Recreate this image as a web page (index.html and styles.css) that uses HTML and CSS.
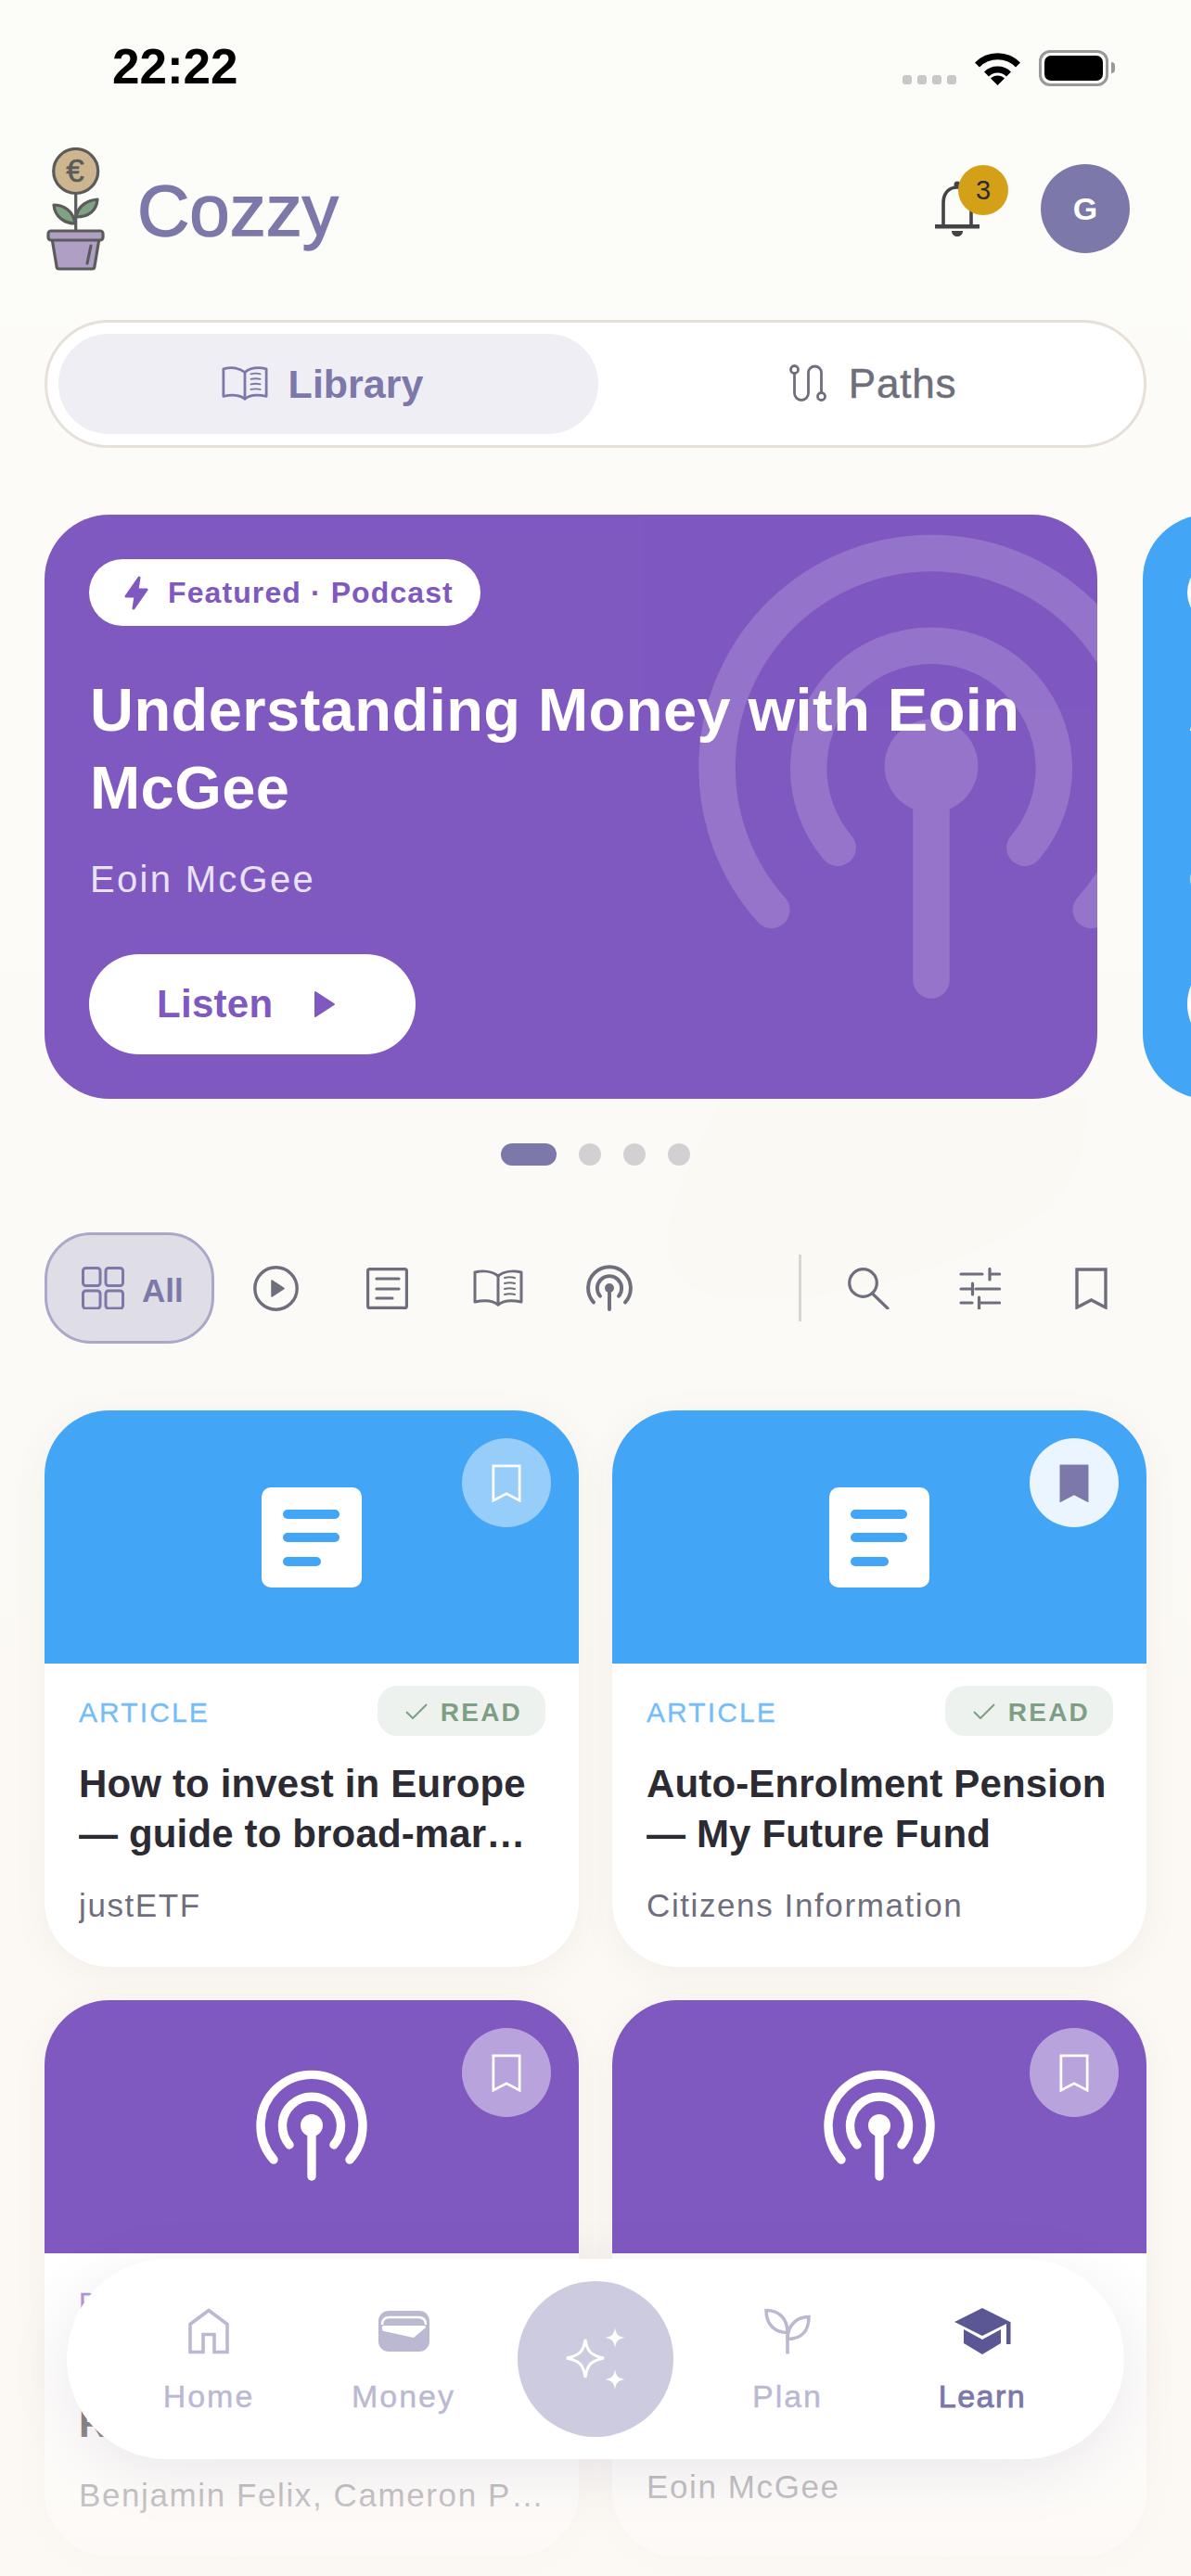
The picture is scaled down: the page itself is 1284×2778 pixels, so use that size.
FILE: index.html
```html
<!DOCTYPE html>
<html lang="en">
<head>
    <meta charset="UTF-8">
    <title>Cozzy</title>
    <meta name="viewport" content="width=device-width, initial-scale=1.0">
    <link rel="stylesheet" href="styles.css">
</head>
<body>
    <svg class="bg-shape" width="1284" height="1500" viewBox="0 0 1284 1500"><path d="M777 1185C750 1240 722 1290 720 1340C720 1385 760 1402 810 1402C930 1402 1080 1350 1133 1300C1165 1270 1172 1230 1170 1185Z"/></svg>

    <svg class="defs" width="0" height="0">
        <symbol id="podcast" viewBox="0 0 120 120">
            <g fill="none" stroke="currentColor" stroke-width="9.4" stroke-linecap="round">
                <path d="M19 97A55 55 0 1 1 101 97"/>
                <path d="M36 81A31.5 31.5 0 1 1 84 81"/>
                <path d="M60 60V115"/>
            </g>
            <circle cx="60" cy="60" r="12" fill="currentColor"/>
        </symbol>
        <symbol id="bookmark" viewBox="0 0 35 45">
            <path d="M2 43V2H33V43L17.5 35Z"/>
        </symbol>
        <symbol id="book" viewBox="0 0 54 40">
            <g fill="none" stroke="currentColor" stroke-width="3" stroke-linecap="round" stroke-linejoin="round">
                <path d="M27 7C21 2 11 1 2 3V35C11 33 21 33 27 38C33 33 43 33 52 35V3C43 1 33 2 27 7Z"/>
                <path d="M27 7V38"/>
                <g stroke-width="2">
                    <path d="M34 9C38 8 41 8 45 9"/>
                    <path d="M34 15C38 14 41 14 45 15"/>
                    <path d="M34 21C38 20 41 20 45 21"/>
                    <path d="M34 27C38 26 41 26 45 27"/>
                </g>
            </g>
        </symbol>
        <symbol id="bolt" viewBox="0 0 26 37">
            <path d="M16 2L2 22H12L10 35L24 15H14Z" fill="currentColor" stroke="currentColor" stroke-width="3" stroke-linejoin="round"/>
        </symbol>
        <symbol id="doc" viewBox="0 0 108 108">
            <rect width="108" height="108" rx="10" fill="#fff"/>
            <rect x="23" y="24" width="61" height="10" rx="5" fill="currentColor"/>
            <rect x="23" y="49" width="61" height="10" rx="5" fill="currentColor"/>
            <rect x="23" y="75" width="41" height="10" rx="5" fill="currentColor"/>
        </symbol>
        <symbol id="check" viewBox="0 0 24 17">
            <path d="M1 9L8 16L23 1" fill="none" stroke="currentColor" stroke-width="2"/>
        </symbol>
    </svg>

    <div class="status-bar">
        <div class="status-time">22:22</div>
        <div class="status-icons">
            <div class="signal"><span></span><span></span><span></span><span></span></div>
            <svg class="wifi" width="51" height="38" viewBox="0 0 51 38">
                <path d="M3.5 16A31 31 0 0 1 47.5 16" fill="none" stroke="#000" stroke-width="7"/>
                <path d="M13.5 26A17 17 0 0 1 37.5 26" fill="none" stroke="#000" stroke-width="7"/>
                <path d="M25.5 38L18 30.5A10.6 10.6 0 0 1 33 30.5Z"/>
            </svg>
            <div class="battery"><div class="battery-fill"></div></div>
            <div class="battery-nub"></div>
        </div>
    </div>

    <div class="header">
        <div class="brand">
            <svg class="logo" width="63" height="133" viewBox="0 0 63 133">
                <g stroke="#5b5b5b" stroke-width="3.2" stroke-linejoin="round" stroke-linecap="round">
                    <path d="M31.7 50V90" fill="none"/>
                    <path d="M31 82C20 82 9 75 8 62C18 62 29 68 31 82Z" fill="#7fa382"/>
                    <path d="M32 75C34 63 44 57 55 56C54 68 46 75 32 75Z" fill="#7fa382"/>
                    <circle cx="31.7" cy="25.5" r="24" fill="#cdb58f"/>
                    <path d="M6 98H57L52 128C52 130 51 131 49 131H14C12 131 11 130 11 128Z" fill="#b09fc4"/>
                    <rect x="2" y="90" width="59" height="10" rx="3" fill="#b09fc4"/>
                    <path d="M48 106L44 125" fill="none"/>
                </g>
                <text class="logo-euro" x="31" y="37">€</text>
            </svg>
            <div class="brand-name">Cozzy</div>
        </div>
        <div class="header-right">
            <div class="bell">
                <svg width="48" height="60" viewBox="0 0 48 60">
                    <path d="M9 47V24C9 12 16 7 24 7C32 7 39 12 39 24V47" fill="none" stroke="#444" stroke-width="3.6"/>
                    <circle cx="24" cy="4" r="3.5" fill="#444"/>
                    <rect y="47" width="48" height="4.5" fill="#444"/>
                    <path d="M18 54H30C30 62 18 62 18 54Z" fill="#444"/>
                </svg>
                <div class="bell-badge">3</div>
            </div>
            <div class="avatar">G</div>
        </div>
    </div>

    <div class="segmented">
        <div class="segment active">
            <svg width="50" height="37"><use href="#book"/></svg>
            <span>Library</span>
        </div>
        <div class="segment">
            <svg width="40" height="40" viewBox="0 0 40 40" fill="none" stroke="currentColor" stroke-width="2.8">
                <circle cx="5.5" cy="5.5" r="4"/>
                <circle cx="34.5" cy="34.5" r="4"/>
                <path d="M5.5 9.5V31A7.5 7.5 0 0 0 20.5 31V9A7 7 0 0 1 34.5 9V30.5"/>
            </svg>
            <span>Paths</span>
        </div>
    </div>

    <div class="carousel">
        <div class="hero hero-purple">
            <svg class="hero-art" width="504" height="504"><use href="#podcast"/></svg>
            <div class="hero-chip">
                <svg width="26" height="37"><use href="#bolt"/></svg>
                <span>Featured · Podcast</span>
            </div>
            <div class="hero-title">Understanding Money with Eoin McGee</div>
            <div class="hero-author">Eoin McGee</div>
            <div class="hero-btn">
                <span>Listen</span>
                <svg width="24" height="30" viewBox="0 0 24 30"><path d="M2 2L22 15L2 28Z" fill="currentColor" stroke="currentColor" stroke-width="2" stroke-linejoin="round"/></svg>
            </div>
        </div>
        <div class="hero hero-blue">
            <div class="hero-chip">
                <svg width="26" height="37"><use href="#bolt"/></svg>
                <span>Featured · Article</span>
            </div>
            <div class="hero-title">Auto-Enrolment Pension — My Future Fund</div>
            <div class="hero-author">Citizens Information</div>
            <div class="hero-btn"><span>Read</span></div>
        </div>
    </div>

    <div class="dots">
        <span class="dot active"></span>
        <span class="dot"></span>
        <span class="dot"></span>
        <span class="dot"></span>
    </div>

    <div class="filters">
        <div class="filter-all">
            <svg width="46" height="46" viewBox="0 0 46 46" fill="none" stroke="currentColor" stroke-width="3">
                <rect x="1.5" y="1.5" width="18.5" height="19" rx="3"/>
                <rect x="26" y="1.5" width="18.5" height="19" rx="3"/>
                <rect x="1.5" y="26" width="18.5" height="19" rx="3"/>
                <rect x="26" y="26" width="18.5" height="19" rx="3"/>
            </svg>
            <span>All</span>
        </div>
        <div class="filter-btn">
            <svg width="49" height="49" viewBox="0 0 49 49">
                <circle cx="24.5" cy="24.5" r="22.7" fill="none" stroke="currentColor" stroke-width="3.4"/>
                <path d="M20 16L33 24.5L20 33Z" fill="currentColor" stroke="currentColor" stroke-width="1.5" stroke-linejoin="round"/>
            </svg>
        </div>
        <div class="filter-btn">
            <svg width="45" height="45" viewBox="0 0 45 45" fill="none" stroke="currentColor" stroke-width="3.2" stroke-linecap="round">
                <rect x="1.6" y="1.6" width="41.8" height="41.8" rx="2"/>
                <path d="M11 12H35M11 23H35M11 33H28"/>
            </svg>
        </div>
        <div class="filter-btn">
            <svg width="54" height="40"><use href="#book"/></svg>
        </div>
        <div class="filter-btn">
            <svg width="50" height="50"><use href="#podcast"/></svg>
        </div>
        <div class="filter-gap"></div>
        <div class="filter-divider"></div>
        <div class="filter-btn">
            <svg width="45" height="45" viewBox="0 0 45 45" fill="none" stroke="currentColor" stroke-width="3.2" stroke-linecap="round">
                <circle cx="16.5" cy="16.5" r="14.8"/>
                <path d="M26.5 28L43 44"/>
            </svg>
        </div>
        <div class="filter-btn">
            <svg width="45" height="45" viewBox="0 0 45 45" fill="none" stroke="currentColor" stroke-width="3.2" stroke-linecap="round">
                <path d="M2 7H25M33 1.500V13M33 7H43.500M2 23H13M14.500 17V29M18 23H43.500M2 38H14M21.500 32V44M21.500 38H43.500"/>
            </svg>
        </div>
        <div class="filter-btn">
            <svg class="bookmark-line" width="35" height="45"><use href="#bookmark"/></svg>
        </div>
    </div>

    <div class="card-grid">
        <div class="card card-blue">
            <div class="card-top">
                <svg width="108" height="108"><use href="#doc"/></svg>
                <div class="save"><svg width="32" height="41"><use href="#bookmark"/></svg></div>
            </div>
            <div class="card-body">
                <div class="card-meta">
                    <span class="card-type">ARTICLE</span>
                    <span class="read-chip"><svg width="24" height="17"><use href="#check"/></svg>READ</span>
                </div>
                <div class="card-title">
                    <div class="title-line">How to invest in Europe</div>
                    <div class="title-line">— guide to broad-market ETFs</div>
                </div>
                <div class="card-author">justETF</div>
            </div>
        </div>
        <div class="card card-blue">
            <div class="card-top">
                <svg width="108" height="108"><use href="#doc"/></svg>
                <div class="save saved"><svg width="32" height="41"><use href="#bookmark"/></svg></div>
            </div>
            <div class="card-body">
                <div class="card-meta">
                    <span class="card-type">ARTICLE</span>
                    <span class="read-chip"><svg width="24" height="17"><use href="#check"/></svg>READ</span>
                </div>
                <div class="card-title">Auto-Enrolment Pension — My Future Fund</div>
                <div class="card-author">Citizens Information</div>
            </div>
        </div>
        <div class="card card-purple">
            <div class="card-top">
                <svg class="card-cast" width="120" height="120"><use href="#podcast"/></svg>
                <div class="save"><svg width="32" height="41"><use href="#bookmark"/></svg></div>
            </div>
            <div class="card-body">
                <div class="card-meta with-chip">
                    <span class="card-type">PODCAST</span>
                </div>
                <div class="card-title">Investing with the Rational Reminder</div>
                <div class="card-author">Benjamin Felix, Cameron Passmore</div>
            </div>
        </div>
        <div class="card card-purple">
            <div class="card-top">
                <svg class="card-cast" width="120" height="120"><use href="#podcast"/></svg>
                <div class="save"><svg width="32" height="41"><use href="#bookmark"/></svg></div>
            </div>
            <div class="card-body">
                <div class="card-meta">
                    <span class="card-type">PODCAST</span>
                </div>
                <div class="card-title">Understanding Money with Eoin McGee</div>
                <div class="card-author">Eoin McGee</div>
            </div>
        </div>
    </div>

    <div class="bottom-fade"></div>

    <div class="tab-bar">
        <div class="tab">
            <svg width="44" height="49" viewBox="0 0 44 49" fill="none" stroke="currentColor" stroke-width="3.6">
                <path d="M2 47V17L22 2L42 17V47H28V28H16V47Z"/>
            </svg>
            <span>Home</span>
        </div>
        <div class="tab">
            <svg width="55" height="44" viewBox="0 0 55 44">
                <rect width="55" height="44" rx="11" fill="currentColor"/>
                <path d="M4 15C4 9 8 7 12 7H43C47 7 51 9 51 15" fill="none" stroke="#fff" stroke-width="2.4"/>
                <path d="M4 18C4 17 4 16 6 16H49C51 16 51 17 51 18L38 29L6 22C4 22 4 20 4 18Z" fill="#fff"/>
            </svg>
            <span>Money</span>
        </div>
        <div class="fab-slot">
            <div class="fab">
                <svg width="80" height="80" viewBox="-40 -40 80 80">
                    <path d="M-11 -21C-9 -8 -5 -4 9 -1C-5 2 -9 6 -11 20C-13 6 -17 2 -31 -1C-17 -4 -13 -8 -11 -21Z" fill="none" stroke="#fff" stroke-width="3"/>
                    <path d="M21 -34C22 -27 24 -24 32 -23C24 -22 22 -19 21 -12C20 -19 18 -22 10 -23C18 -24 20 -27 21 -34Z" fill="#fff"/>
                    <path d="M21 11C22 18 24 21 32 22C24 23 22 26 21 33C20 26 18 23 10 22C18 21 20 18 21 11Z" fill="#fff"/>
                </svg>
            </div>
        </div>
        <div class="tab">
            <svg width="50" height="49" viewBox="0 0 50 49" fill="none" stroke="currentColor" stroke-width="3.6">
                <path d="M2 2C15 2 25 10 25 26C12 26 2 18 2 2Z"/>
                <path d="M25 33C25 19 34 9 48 9C48 24 40 33 25 33Z"/>
                <path d="M25 22V49"/>
            </svg>
            <span>Plan</span>
        </div>
        <div class="tab active">
            <svg width="61" height="50" viewBox="0 0 61 50" fill="currentColor">
                <path d="M30 0L60 15L30 30L0 15Z"/>
                <path d="M10 23L30 34L50 23V38L30 50L10 38Z"/>
                <rect x="56" y="15" width="4.500" height="24"/>
            </svg>
            <span>Learn</span>
        </div>
    </div>
</body>
</html>
```

FILE: styles.css
```css
* {
    box-sizing: border-box;
}
html, body {
    margin: 0;
    padding: 0;
}
body {
    position: relative;
    width: 1284px;
    height: 2778px;
    overflow: hidden;
    padding: 0 48px;
    background: linear-gradient(180deg, #fcfcf8 0%, #fcfaf6 50%, #fcf8f3 100%);
    font-family: 'Liberation Sans', Arial, sans-serif;
    color: #2c2b33;
}
.defs {
    position: absolute;
}
.bg-shape {
    position: absolute;
    top: 0;
    left: 0;
}
.bg-shape path {
    fill: #fbf9f4;
}

/* status bar */
.status-bar {
    position: relative;
    display: flex;
    justify-content: space-between;
    align-items: center;
    height: 146px;
    padding: 0 34px 0 73px;
}
.status-time {
    margin-top: -3px;
    font-size: 53px;
    font-weight: 700;
    color: #000;
}
.status-icons {
    display: flex;
    align-items: center;
}
.signal {
    display: flex;
    gap: 6px;
    margin: 26px 19px 0 0;
}
.signal span {
    width: 10px;
    height: 10px;
    border-radius: 3px;
    background: #c8c8c8;
}
.wifi {
    margin-right: 19px;
}
.battery {
    width: 75px;
    height: 39px;
    padding: 3px;
    border: 3px solid #999;
    border-radius: 12px;
}
.battery-fill {
    height: 100%;
    background: #000;
    border-radius: 7px;
}
.battery-nub {
    width: 4px;
    height: 12px;
    margin-left: 3px;
    background: #999;
    border-radius: 0 4px 4px 0;
}

/* header */
.header {
    position: relative;
    display: flex;
    justify-content: space-between;
    align-items: center;
    height: 158px;
    padding: 0 18px 0 2px;
}
.brand {
    display: flex;
    align-items: center;
    gap: 35px;
}
.logo-euro {
    font-size: 35px;
    fill: #5b5b5b;
    stroke: #5b5b5b;
    stroke-width: 0.6;
    text-anchor: middle;
}
.brand-name {
    padding-top: 4px;
    font-size: 78px;
    color: #7d78aa;
    -webkit-text-stroke: 1.5px #7d78aa;
}
.header-right {
    display: flex;
    align-items: center;
    gap: 66px;
}
.bell {
    position: relative;
    width: 48px;
    height: 60px;
}
.bell-badge {
    position: absolute;
    top: -17px;
    left: 25px;
    width: 54px;
    height: 54px;
    border-radius: 50%;
    background: #d4a017;
    color: #2c2b33;
    font-size: 29px;
    line-height: 54px;
    text-align: center;
}
.avatar {
    width: 96px;
    height: 96px;
    border-radius: 50%;
    background: #7d78aa;
    color: #fff;
    font-size: 34px;
    font-weight: 700;
    line-height: 96px;
    text-align: center;
}

/* library / paths switch */
.segmented {
    position: relative;
    display: flex;
    height: 138px;
    margin-top: 41px;
    padding: 12px;
    background: #fff;
    border: 3px solid #e6e0d8;
    border-radius: 69px;
}
.segment {
    flex: 1;
    display: flex;
    align-items: center;
    justify-content: center;
    gap: 24px;
    padding-left: 16px;
    color: #6f6e7c;
    font-size: 44px;
    letter-spacing: 0.8px;
    border-radius: 54px;
    -webkit-text-stroke: 0.5px #6f6e7c;
}
.segment svg {
    margin-top: -2px;
}
.segment.active {
    flex: 0 0 582px;
    gap: 22px;
    padding: 0 13px 0 0;
    background: #efeef5;
    color: #7d78aa;
    font-size: 43px;
    font-weight: 700;
    letter-spacing: 0;
    -webkit-text-stroke: 0;
}

/* featured carousel */
.carousel {
    position: relative;
    display: flex;
    gap: 49px;
    margin-top: 72px;
}
.hero {
    position: relative;
    flex: 0 0 1135px;
    height: 630px;
    padding: 48px;
    border-radius: 70px;
    overflow: hidden;
    color: #fff;
}
.hero-purple {
    background: #7f58c0;
    color: #7f58c0;
}
.hero-blue {
    background: #42a5f5;
    color: #42a5f5;
}
.hero-art {
    position: absolute;
    top: 19px;
    left: 704px;
    color: #fff;
    opacity: 0.17;
}
.hero-chip {
    position: relative;
    display: inline-flex;
    align-items: center;
    gap: 21px;
    height: 72px;
    padding: 0 29px 0 38px;
    background: #fff;
    border-radius: 36px;
    font-size: 32px;
    font-weight: 700;
    letter-spacing: 1.1px;
}
.hero-title {
    position: relative;
    margin: 49px 0 0 1px;
    color: #fff;
    font-size: 65px;
    font-weight: 700;
    line-height: 84px;
    letter-spacing: 0.45px;
}
.hero-author {
    position: relative;
    margin: 32px 0 0 1px;
    color: #e8e2f4;
    font-size: 40px;
    line-height: 48px;
    letter-spacing: 2.3px;
}
.hero-btn {
    position: relative;
    display: inline-flex;
    align-items: center;
    gap: 44px;
    height: 108px;
    margin-top: 57px;
    padding: 0 86px 0 73px;
    background: #fff;
    border-radius: 54px;
    font-size: 42px;
    font-weight: 700;
    letter-spacing: 0.3px;
}

/* pager dots */
.dots {
    position: relative;
    display: flex;
    justify-content: center;
    gap: 24px;
    margin-top: 48px;
}
.dot {
    width: 24px;
    height: 24px;
    border-radius: 50%;
    background: #d2d0d2;
}
.dot.active {
    width: 60px;
    border-radius: 12px;
    background: #7d78aa;
}

/* filter row */
.filters {
    position: relative;
    display: flex;
    align-items: center;
    height: 120px;
    margin-top: 72px;
}
.filter-all {
    display: flex;
    align-items: center;
    gap: 19px;
    width: 183px;
    height: 120px;
    margin-right: 6px;
    padding-left: 37px;
    background: #dfdde6;
    border: 3px solid #aaa7c9;
    border-radius: 50px;
    color: #7d78aa;
    font-size: 35px;
    font-weight: 700;
}
.filter-all span {
    margin-top: 6px;
}
.filter-btn {
    display: flex;
    align-items: center;
    justify-content: center;
    flex: 0 0 120px;
    height: 120px;
    color: #6f6e7c;
}
.filter-gap {
    flex: 1;
}
.filter-divider {
    width: 3px;
    height: 72px;
    margin: 0 12px 0 0;
    background: #d8d6d4;
}
.bookmark-line {
    fill: none;
    stroke: #6f6e7c;
    stroke-width: 3.4;
}

/* cards */
.card-grid {
    position: relative;
    display: grid;
    grid-template-columns: 576px 576px;
    grid-auto-rows: 600px;
    gap: 36px;
    margin-top: 72px;
}
.card {
    background: #fff;
    border-radius: 70px;
    overflow: hidden;
    box-shadow: 0 8px 36px rgba(120, 95, 80, 0.07);
}
.card-top {
    position: relative;
    display: flex;
    align-items: center;
    justify-content: center;
    height: 273px;
}
.card-blue .card-top {
    background: #42a5f5;
    color: #42a5f5;
}
.card-purple .card-top {
    background: #7f58c0;
    color: #7f58c0;
}
.card-cast {
    color: #fff;
    margin-bottom: 4px;
}
.save {
    position: absolute;
    top: 30px;
    right: 30px;
    display: flex;
    align-items: center;
    justify-content: center;
    width: 96px;
    height: 96px;
    border-radius: 50%;
    background: rgba(255, 255, 255, 0.45);
    fill: none;
    stroke: #fff;
    stroke-width: 3;
}
.save.saved {
    background: #eaf5ff;
    fill: #7d78aa;
    stroke: #7d78aa;
}
.card-body {
    padding: 24px 36px 0 37px;
}
.card-meta {
    display: flex;
    align-items: center;
    justify-content: space-between;
    min-height: 45px;
}
.card-meta.with-chip {
    min-height: 54px;
}
.card-type {
    padding-top: 3px;
    font-size: 30px;
    letter-spacing: 2.1px;
    -webkit-text-stroke: 0.3px;
}
.card-blue .card-type {
    color: #74bdf8;
}
.card-purple .card-type {
    color: #a58ad3;
}
.read-chip {
    display: flex;
    align-items: center;
    gap: 14px;
    height: 54px;
    padding: 3px 25px 0 30px;
    background: #eef2ef;
    border-radius: 21px;
    color: #7e9f85;
    font-size: 28px;
    font-weight: 700;
    letter-spacing: 2.2px;
}
.read-chip svg {
    margin-top: -3px;
}
.card-title {
    overflow: hidden;
    height: 108px;
    margin: 25px 0 0 0;
    font-size: 42px;
    font-weight: 700;
    line-height: 54px;
    letter-spacing: 0.15px;
}
.title-line {
    width: 500px;
    white-space: nowrap;
    overflow: hidden;
    text-overflow: ellipsis;
}
.card-author {
    margin-top: 29px;
    color: #6f6e7c;
    font-size: 35px;
    line-height: 42px;
    letter-spacing: 1.6px;
    white-space: nowrap;
    overflow: hidden;
    text-overflow: ellipsis;
}

/* bottom of the screen */
.bottom-fade {
    position: absolute;
    left: 0;
    right: 0;
    bottom: 0;
    height: 348px;
    background: linear-gradient(180deg, rgba(252, 248, 243, 0) 0%, rgba(252, 248, 243, 0.8) 100%);
}
.tab-bar {
    position: absolute;
    left: 72px;
    right: 72px;
    bottom: 126px;
    display: flex;
    align-items: flex-start;
    height: 216px;
    padding: 0 48px;
    background: #fff;
    border-radius: 108px;
    box-shadow: 0 14px 60px rgba(125, 120, 170, 0.14);
}
.tab {
    flex: 1;
    display: flex;
    flex-direction: column;
    align-items: center;
    height: 216px;
    padding-top: 53px;
    color: #bbb9d2;
    font-size: 34px;
    letter-spacing: 2px;
    -webkit-text-stroke: 0.4px #bbb9d2;
}
.tab svg {
    height: 50px;
}
.tab span {
    margin-top: 26px;
}
.tab.active {
    color: #5a5794;
    -webkit-text-stroke: 0;
}
.tab.active span {
    color: #7d78aa;
    letter-spacing: 1.5px;
    -webkit-text-stroke: 0.9px #7d78aa;
}
.fab-slot {
    flex: 0 0 204px;
    display: flex;
    justify-content: center;
    padding-top: 24px;
}
.fab {
    display: flex;
    align-items: center;
    justify-content: center;
    width: 168px;
    height: 168px;
    border-radius: 50%;
    background: #cccbdf;
}
```
